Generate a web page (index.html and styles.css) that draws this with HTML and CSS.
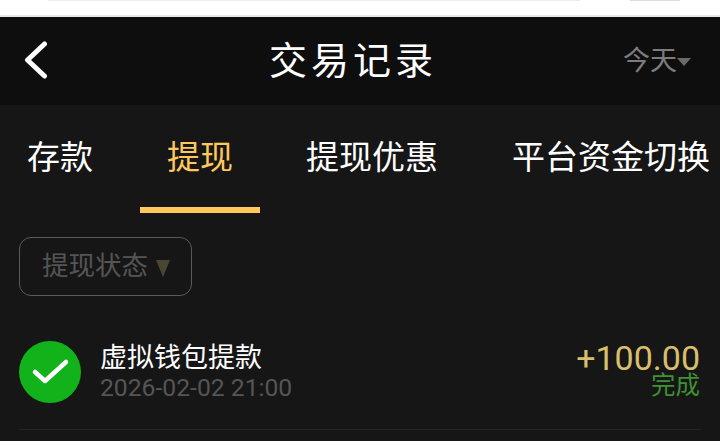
FILE: index.html
```html
<!DOCTYPE html>
<html lang="zh-CN">
<head>
  <meta charset="UTF-8">
  <meta name="viewport" content="width=device-width, initial-scale=1.0">
  <title>交易记录</title>
  <link rel="stylesheet" href="styles.css">
</head>
<body>
<div class="top-strip">
  <span class="strip-field"></span>
  <span class="strip-button"></span>
</div>
<header class="header">
  <svg class="back-icon" width="24" height="38" viewBox="0 0 24 38">
    <path d="M20.500 3 L3.500 19 L20.500 35" fill="none" stroke="#fff" stroke-width="5" stroke-linecap="round" stroke-linejoin="round"/>
  </svg>
  <h1 class="title">交易记录</h1>
  <div class="date-select">今天<span class="date-arrow"></span></div>
</header>
<main class="content">
  <nav class="tabs">
    <a class="tab">存款</a>
    <a class="tab active">提现</a>
    <a class="tab tab-wide">提现优惠</a>
    <a class="tab">平台资金切换</a>
  </nav>
  <div class="filter-row">
    <div class="filter">提现状态<span class="filter-arrow"></span></div>
  </div>
  <div class="record">
    <svg class="status-icon" width="62" height="62" viewBox="0 0 62 62">
      <circle cx="31" cy="31" r="31" fill="#12b31a"/>
      <path d="M16 31 L26 40 L47 21" fill="none" stroke="#fff" stroke-width="4.500" stroke-linecap="round" stroke-linejoin="round"/>
    </svg>
    <div class="record-info">
      <div class="record-name">虚拟钱包提款</div>
      <div class="record-time">2026-02-02 21:00</div>
    </div>
    <div class="record-side">
      <div class="record-amount">+100.00</div>
      <div class="record-status">完成</div>
    </div>
  </div>
</main>
</body>
</html>
```

FILE: styles.css
```css
html,
body {
  height: 100%;
}

body {
  display: flex;
  flex-direction: column;
  margin: 0;
  overflow: hidden;
  font-family: "Noto Sans CJK SC", "Noto Sans", sans-serif;
  background-color: #161616;
}

.top-strip {
  display: flex;
  height: 15px;
  padding-left: 48px;
  background-color: #ffffff;
  border-bottom: 2px solid #e6e6e6;
}

.strip-field {
  width: 532px;
  height: 1px;
  background-color: #eeeeee;
}

.strip-button {
  width: 50px;
  height: 1px;
  margin-left: 50px;
  background-color: #dddddd;
}

.header {
  display: flex;
  align-items: center;
  justify-content: space-between;
  position: relative;
  height: 88px;
  padding: 0 29px 0 24px;
  background-color: #0e0e0e;
}

.back-icon {
  margin-bottom: 2px;
}

.title {
  position: absolute;
  left: 0;
  right: 0;
  margin: 0;
  padding-right: 14px;
  font-size: 38px;
  font-weight: 400;
  letter-spacing: 4px;
  line-height: 1;
  text-align: center;
  color: #ffffff;
  transform: translateY(-3px);
}

.date-select {
  display: flex;
  align-items: center;
  font-size: 27px;
  line-height: 1;
  color: #7c7c7c;
  transform: translateY(-3px);
}

.date-arrow {
  width: 0;
  height: 0;
  margin-top: 8px;
  border-left: 7.500px solid transparent;
  border-right: 7.500px solid transparent;
  border-top: 8px solid #6b6b6b;
}

.tabs {
  display: flex;
  gap: 20px;
  height: 108px;
  overflow: hidden;
}

.tab {
  flex-shrink: 0;
  height: 102px;
  padding: 0 27px;
  font-size: 33px;
  line-height: 100px;
  color: #ffffff;
}

.tab.active {
  color: #ffc85c;
  border-bottom: 6px solid #ffc85c;
}

.tab-wide {
  margin-left: -1px;
}

.filter-row {
  display: flex;
  padding: 24px 19px 0;
}

.filter {
  display: flex;
  align-items: center;
  box-sizing: border-box;
  width: 173px;
  height: 59px;
  padding: 0 0 6px 22px;
  font-size: 26.500px;
  color: #555555;
  border: 1px solid #5a5a5a;
  border-radius: 12px;
}

.filter-arrow {
  width: 0;
  height: 0;
  margin: 10px 0 0 8px;
  border-left: 7px solid transparent;
  border-right: 7px solid transparent;
  border-top: 17px solid #4a4632;
}

.record {
  display: flex;
  align-items: center;
  height: 88px;
  margin: 45px 19px 0;
  border-bottom: 1px solid #252525;
}

.status-icon {
  flex-shrink: 0;
  margin-right: 19px;
  margin-bottom: 26px;
}

.record-info {
  flex: 1;
  margin-bottom: 26px;
}

.record-name {
  padding-bottom: 6px;
  font-size: 27px;
  line-height: 26px;
  color: #ffffff;
}

.record-time {
  font-family: Roboto, sans-serif;
  font-size: 24.700px;
  line-height: 26px;
  color: #555555;
}

.record-side {
  margin-bottom: 26px;
  padding-right: 1px;
  text-align: right;
}

.record-amount {
  font-family: Roboto, sans-serif;
  font-size: 34px;
  line-height: 24px;
  color: #d9bf6b;
}

.record-status {
  font-size: 24.500px;
  line-height: 28px;
  color: #3f9134;
}
```
